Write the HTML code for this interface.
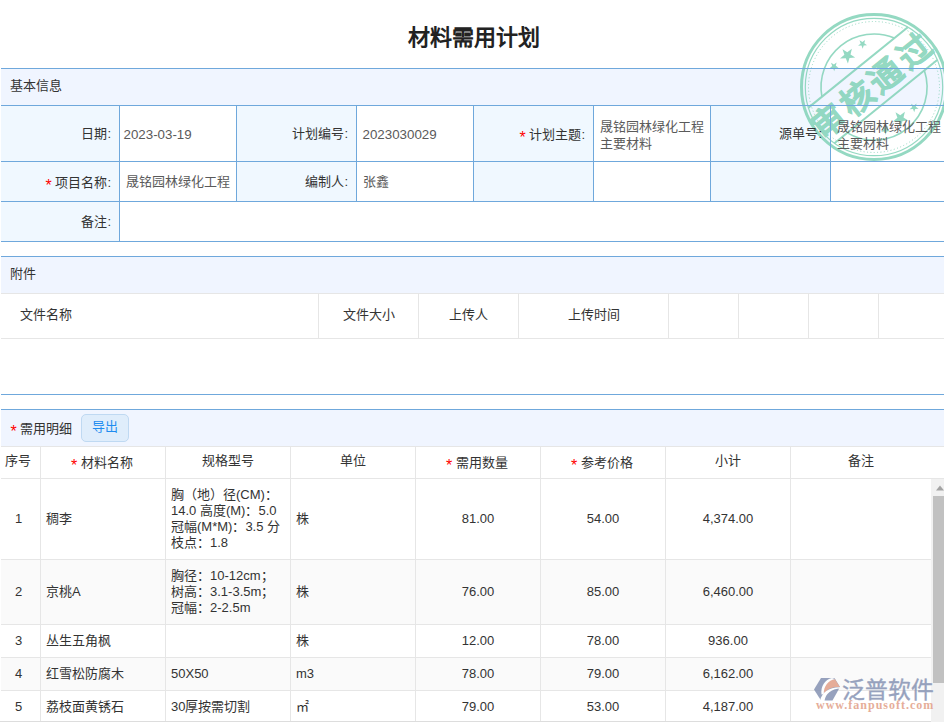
<!DOCTYPE html>
<html lang="zh-CN">
<head>
<meta charset="utf-8">
<title>材料需用计划</title>
<style>
*{box-sizing:border-box;margin:0;padding:0}
html,body{width:944px;height:722px;overflow:hidden;background:#fff}
body{position:relative;font-family:"Liberation Sans",sans-serif;font-size:13px;color:#333}
.a{position:absolute}
.hl{z-index:2;position:absolute;left:1px;width:943px;height:1px;background:#6fa8dc}
.vl{z-index:2;position:absolute;width:1px;background:#6fa8dc}
.gl{position:absolute;height:1px;background:#e6e6e6}
.gv{position:absolute;width:1px;background:#e6e6e6}
.sh{position:absolute;left:1px;width:943px;background:#f0f5ff}
.lb{position:absolute;background:#f0f8ff}
.t{z-index:3;position:absolute;white-space:nowrap;line-height:16px;height:16px}
.r{text-align:right}
.c{text-align:center}
.v{color:#5a5a5a}
.s{color:#f00;font-size:16px;position:relative;top:4px}
h1{position:absolute;left:0;width:948px;top:23px;height:30px;line-height:30px;text-align:center;font-size:22px;font-weight:bold;color:#222}

.row{position:absolute;left:1px;width:930px}
.alt{background:#fafafa}
.cell{position:absolute;top:0;height:100%;padding-bottom:1px;display:flex;align-items:center;line-height:16px;white-space:nowrap}
.cc{justify-content:center}
.cl{padding-left:5px}
</style>
</head>
<body>
<h1>材料需用计划</h1>

<!-- ===== 基本信息 ===== -->
<div class="sh" style="top:69px;height:36px"></div>
<div class="lb" style="left:1px;top:106px;width:118px;height:135px"></div>
<div class="lb" style="left:237px;top:106px;width:119px;height:95px"></div>
<div class="lb" style="left:474px;top:106px;width:119px;height:95px"></div>
<div class="lb" style="left:711px;top:106px;width:119px;height:95px"></div>
<div class="hl" style="top:68px"></div>
<div class="hl" style="top:105px"></div>
<div class="hl" style="top:161px"></div>
<div class="hl" style="top:201px"></div>
<div class="hl" style="top:241px"></div>
<div class="vl" style="left:119px;top:105px;height:136px"></div>
<div class="vl" style="left:236px;top:105px;height:96px"></div>
<div class="vl" style="left:356px;top:105px;height:96px"></div>
<div class="vl" style="left:473px;top:105px;height:96px"></div>
<div class="vl" style="left:593px;top:105px;height:96px"></div>
<div class="vl" style="left:710px;top:105px;height:96px"></div>
<div class="vl" style="left:830px;top:105px;height:96px"></div>

<div class="t" style="left:10px;top:78px">基本信息</div>

<div class="t r" style="left:1px;width:110px;top:126px">日期:</div>
<div class="t v" style="left:123.5px;top:127px;font-size:13.33px">2023-03-19</div>
<div class="t r" style="left:237px;width:111px;top:126px">计划编号:</div>
<div class="t v" style="left:362.5px;top:127px;font-size:13.33px">2023030029</div>
<div class="t r" style="left:474px;width:111px;top:126px"><span class="s">*</span> 计划主题:</div>
<div class="t v" style="left:600px;top:118px;line-height:17px;height:34px;white-space:normal;width:108px">晟铭园林绿化工程主要材料</div>
<div class="t r" style="left:711px;width:111px;top:126px">源单号:</div>
<div class="t v" style="left:837px;top:118px;line-height:17px;height:34px;white-space:normal;width:108px">晟铭园林绿化工程主要材料</div>

<div class="t r" style="left:1px;width:110px;top:174px"><span class="s">*</span> 项目名称:</div>
<div class="t v" style="left:126px;top:174px">晟铭园林绿化工程</div>
<div class="t r" style="left:237px;width:111px;top:174px">编制人:</div>
<div class="t v" style="left:363px;top:174px">张鑫</div>

<div class="t r" style="left:1px;width:110px;top:214px">备注:</div>

<!-- ===== 附件 ===== -->
<div class="sh" style="top:257px;height:36px"></div>
<div class="hl" style="top:256px"></div>
<div class="gl" style="left:1px;width:943px;top:293px"></div>
<div class="gl" style="left:1px;width:943px;top:338px"></div>
<div class="gv" style="left:318px;top:293px;height:46px"></div>
<div class="gv" style="left:418px;top:293px;height:46px"></div>
<div class="gv" style="left:518px;top:293px;height:46px"></div>
<div class="gv" style="left:668px;top:293px;height:46px"></div>
<div class="gv" style="left:738px;top:293px;height:46px"></div>
<div class="gv" style="left:808px;top:293px;height:46px"></div>
<div class="gv" style="left:878px;top:293px;height:46px"></div>
<div class="hl" style="top:394px"></div>

<div class="t" style="left:10px;top:266px">附件</div>
<div class="t" style="left:20px;top:307px">文件名称</div>
<div class="t c" style="left:318px;width:101px;top:307px">文件大小</div>
<div class="t c" style="left:418px;width:101px;top:307px">上传人</div>
<div class="t c" style="left:518px;width:151px;top:307px">上传时间</div>

<!-- ===== 需用明细 ===== -->
<div class="sh" style="top:410px;height:36px"></div>
<div class="hl" style="top:409px"></div>
<div class="t" style="left:10.5px;top:420px"><span class="s">*</span> 需用明细</div>
<div class="a" style="left:81px;top:414px;width:48px;height:28px;border:1px solid #bfd9f2;border-radius:5px;background:#dfedfb;color:#1e8cf0;text-align:center;line-height:24px">导出</div>

<!-- table header -->
<div class="gl" style="left:1px;width:943px;top:446px"></div>
<div class="row" style="top:447px;height:31px;width:943px">
<div class="cell cc" style="left:-4px;width:41px;padding-bottom:4px">序号</div>
<div class="cell cc" style="left:40px;width:124px;padding-right:2px;padding-bottom:0"><span><span class="s">*</span> 材料名称</span></div>
<div class="cell cc" style="left:165px;width:124px;padding-bottom:4px">规格型号</div>
<div class="cell cc" style="left:290px;width:124px;padding-bottom:4px">单位</div>
<div class="cell cc" style="left:415px;width:124px;padding-right:2px;padding-bottom:0"><span><span class="s">*</span> 需用数量</span></div>
<div class="cell cc" style="left:540px;width:124px;padding-right:2px;padding-bottom:0"><span><span class="s">*</span> 参考价格</span></div>
<div class="cell cc" style="left:665px;width:124px;padding-bottom:4px">小计</div>
<div class="cell cc" style="left:790px;width:140px;padding-bottom:4px">备注</div>
</div>
<div class="gl" style="left:1px;width:943px;top:478px;z-index:1"></div>
<div class="row" style="top:479px;height:80px">
<div class="cell cc" style="left:-3px;width:41px">1</div>
<div class="cell cl" style="left:40px;width:124px">稠李</div>
<div class="cell cl" style="left:165px;width:124px">胸（地）径(CM)：<br>14.0 高度(M)：5.0<br>冠幅(M*M)：3.5 分<br>枝点：1.8</div>
<div class="cell cl" style="left:290px;width:124px">株</div>
<div class="cell cc" style="left:415px;width:124px">81.00</div>
<div class="cell cc" style="left:540px;width:124px">54.00</div>
<div class="cell cc" style="left:665px;width:124px">4,374.00</div>
</div>
<div class="gl" style="left:1px;width:930px;top:559px"></div>
<div class="row alt" style="top:560px;height:64px">
<div class="cell cc" style="left:-3px;width:41px">2</div>
<div class="cell cl" style="left:40px;width:124px">京桃A</div>
<div class="cell cl" style="left:165px;width:124px">胸径：10-12cm；<br>树高：3.1-3.5m；<br>冠幅：2-2.5m</div>
<div class="cell cl" style="left:290px;width:124px">株</div>
<div class="cell cc" style="left:415px;width:124px">76.00</div>
<div class="cell cc" style="left:540px;width:124px">85.00</div>
<div class="cell cc" style="left:665px;width:124px">6,460.00</div>
</div>
<div class="gl" style="left:1px;width:930px;top:624px"></div>
<div class="row" style="top:625px;height:32px">
<div class="cell cc" style="left:-3px;width:41px">3</div>
<div class="cell cl" style="left:40px;width:124px">丛生五角枫</div>
<div class="cell cl" style="left:290px;width:124px">株</div>
<div class="cell cc" style="left:415px;width:124px">12.00</div>
<div class="cell cc" style="left:540px;width:124px">78.00</div>
<div class="cell cc" style="left:665px;width:124px">936.00</div>
</div>
<div class="gl" style="left:1px;width:930px;top:657px"></div>
<div class="row alt" style="top:658px;height:32px">
<div class="cell cc" style="left:-3px;width:41px">4</div>
<div class="cell cl" style="left:40px;width:124px">红雪松防腐木</div>
<div class="cell cl" style="left:165px;width:124px">50X50</div>
<div class="cell cl" style="left:290px;width:124px">m3</div>
<div class="cell cc" style="left:415px;width:124px">78.00</div>
<div class="cell cc" style="left:540px;width:124px">79.00</div>
<div class="cell cc" style="left:665px;width:124px">6,162.00</div>
</div>
<div class="gl" style="left:1px;width:930px;top:690px"></div>
<div class="row" style="top:691px;height:32px">
<div class="cell cc" style="left:-3px;width:41px">5</div>
<div class="cell cl" style="left:40px;width:124px">荔枝面黄锈石</div>
<div class="cell cl" style="left:165px;width:124px">30厚按需切割</div>
<div class="cell cl" style="left:290px;width:124px">㎡</div>
<div class="cell cc" style="left:415px;width:124px">79.00</div>
<div class="cell cc" style="left:540px;width:124px">53.00</div>
<div class="cell cc" style="left:665px;width:124px">4,187.00</div>
</div>
<div class="gv" style="left:40px;top:446px;height:276px"></div>
<div class="gv" style="left:165px;top:446px;height:276px"></div>
<div class="gv" style="left:290px;top:446px;height:276px"></div>
<div class="gv" style="left:415px;top:446px;height:276px"></div>
<div class="gv" style="left:540px;top:446px;height:276px"></div>
<div class="gv" style="left:665px;top:446px;height:276px"></div>
<div class="gv" style="left:790px;top:446px;height:276px"></div>
<div class="gl" style="left:0;width:944px;top:721px;background:#ddd"></div>
<div class="a" style="left:931px;top:479px;width:13px;height:243px;background:#f1f1f1"></div>
<div class="a" style="left:933px;top:496px;width:11px;height:187px;background:#c1c1c1"></div>
<svg class="a" style="left:931px;top:479px" width="13" height="17" viewBox="0 0 13 17"><path d="M5 11.5 L9 6.5 L13 11.5 Z" fill="#a3a3a3"/></svg>
<!-- ===== stamp ===== -->
<svg class="a" style="left:794px;top:8px;opacity:0.88;z-index:1" width="150" height="160" viewBox="794 8 150 160">
<g fill="none" stroke="#86d4ba">
<circle cx="874" cy="87" r="72.5" stroke-width="3"/>
<circle cx="874" cy="87" r="68.7" stroke-width="1.2"/>
<circle cx="874" cy="87" r="65.5" stroke-width="1" stroke-dasharray="1 2.4"/>
<g transform="translate(874 87) rotate(-39)">
<path d="M-46.6 -25.2 A53 53 0 0 1 46.6 -25.2" stroke-width="1.6"/>
<path d="M49.6 18.8 A53 53 0 0 1 -49.6 18.8" stroke-width="1.6"/>
<path d="M-63.9 -25.2 H63.9 M-66.1 18.8 H66.1" stroke-width="2"/>
</g></g>
<g fill="#86d4ba">
<polygon points="831.0,62.8 833.9,64.6 836.6,62.6 835.8,65.8 838.5,67.7 835.2,68.0 834.2,71.2 833.0,68.1 829.6,68.2 832.2,66.0"/>
<polygon points="842.5,49.3 847.3,52.3 851.9,48.8 850.5,54.4 855.2,57.6 849.5,58.0 847.9,63.5 845.8,58.2 840.0,58.4 844.4,54.7"/>
<polygon points="859.5,40.3 862.4,42.1 865.1,40.1 864.3,43.3 867.0,45.2 863.7,45.5 862.7,48.7 861.5,45.6 858.1,45.7 860.7,43.5"/>
<polygon points="911.0,103.8 913.9,105.6 916.6,103.6 915.8,106.8 918.5,108.7 915.2,109.0 914.2,112.2 913.0,109.1 909.6,109.2 912.2,107.0"/>
<polygon points="895.5,112.3 900.3,115.3 904.9,111.8 903.5,117.4 908.2,120.6 902.5,121.0 900.9,126.5 898.8,121.2 893.0,121.4 897.4,117.7"/>
<polygon points="882.5,126.3 885.4,128.1 888.1,126.1 887.3,129.3 890.0,131.2 886.7,131.5 885.7,134.7 884.5,131.6 881.1,131.7 883.7,129.5"/>
</g>
<text transform="translate(874 87) rotate(-39)" x="0" y="10" text-anchor="middle" fill="#86d4ba" stroke="#86d4ba" stroke-width="0.6" font-family="&quot;Liberation Serif&quot;,serif" font-weight="bold" font-size="33" letter-spacing="4">审核通过</text>
</svg>
<!-- ===== logo ===== -->
<svg class="a" style="left:812px;top:674px;opacity:.85" width="132" height="44" viewBox="812 674 132 44">
<path d="M814 689.5 L821 678 H834.5 L840 687 L832.5 700.5 H821 Z" fill="#8592b3"/>
<path d="M823.5 694 C823 685 828 679.5 835 679.2 L840 687.2 C834 686 827.5 688.5 823.5 694 Z" fill="#e29f88"/>
<path d="M820 701 C821.5 692.5 829 687 840 687.2 L840.6 688.6 C831 689 825.5 694 824.5 701 Z" fill="#fff"/>
<path d="M821.5 694.5 C820.5 686 825 679.5 832 678 L835 679 C828.5 680.5 823.5 686 823.8 694.2 Z" fill="#fff"/>
<text x="842" y="698" fill="#8592b3" font-family="&quot;Liberation Sans&quot;,sans-serif" font-weight="500" stroke="#8592b3" stroke-width="0.35" font-size="22.8">泛普软件</text>
<text x="816" y="709.2" fill="#e29f88" font-family="&quot;Liberation Serif&quot;,serif" font-weight="bold" font-size="12" letter-spacing="1">www.fanpusoft.com</text>
</svg>
</body>
</html>
